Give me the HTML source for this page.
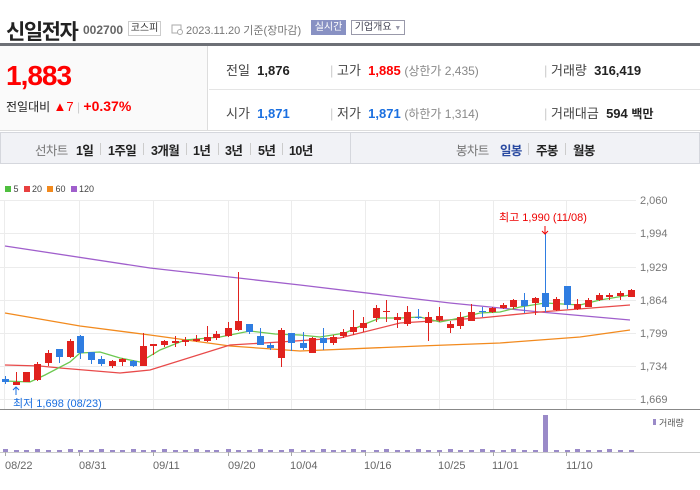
<!DOCTYPE html>
<html><head><meta charset="utf-8"><style>
*{margin:0;padding:0;box-sizing:border-box}
body{width:700px;height:490px;background:#fff;font-family:"Liberation Sans","Noto Sans CJK KR",sans-serif;position:relative;overflow:hidden;color:#333}
.a{position:absolute;white-space:nowrap}
.t{position:absolute;top:140px;font-size:12.5px;color:#222;letter-spacing:-0.6px;font-weight:bold}
.g{color:#777;font-weight:normal}
.s{position:absolute;top:143px;width:1px;height:12px;background:#ccc}
</style></head><body>
<div class="a" style="left:6px;top:16px;font-size:21px;font-weight:bold;color:#222;letter-spacing:-1.5px">신일전자</div>
<div class="a" style="left:83px;top:23px;font-size:12px;font-weight:bold;color:#666">002700</div>
<div class="a" style="left:128px;top:21px;width:33px;height:15px;border:1px solid #ccc;font-size:10px;text-align:center;line-height:13px;color:#333">코스피</div>
<svg class="a" style="left:171px;top:23px" width="12" height="12"><rect x="1" y="2" width="9" height="8" fill="none" stroke="#aaa"/><circle cx="9" cy="9" r="2.5" fill="#fff" stroke="#aaa"/></svg>
<div class="a" style="left:186px;top:22px;font-size:11px;color:#777">2023.11.20 기준(장마감)</div>
<div class="a" style="left:311px;top:20px;width:35px;height:15px;background:#8891c3;color:#fff;font-size:10px;text-align:center;line-height:15px">실시간</div>
<div class="a" style="left:351px;top:20px;width:54px;height:15px;border:1px solid #99a;color:#445;font-size:10px;text-align:center;line-height:13px">기업개요 <span style="color:#99a;font-size:7px">▼</span></div>
<div class="a" style="left:0;top:43px;width:700px;height:3px;background:#6d7076"></div>
<div class="a" style="left:0;top:46px;width:208px;height:84px;background:#fafafa;border-right:1px solid #ddd"></div>
<div class="a" style="left:6px;top:60px;font-size:28px;font-weight:bold;color:#f00;letter-spacing:-1px">1,883</div>
<div class="a" style="left:6px;top:98px;font-size:12px;color:#222">전일대비 <span style="color:#f00;font-size:13px">▲7</span> <span style="color:#ccc">|</span> <b style="color:#f00;font-size:14px">+0.37%</b></div>
<div class="a" style="left:209px;top:89px;width:491px;height:1px;background:#e5e5e5"></div>
<div class="a" style="left:0;top:130px;width:700px;height:1px;background:#ddd"></div>
<div class="a" style="left:226px;top:60px;font-size:13px;color:#444">전일 &nbsp;<b style="color:#222">1,876</b></div>
<div class="a" style="left:330px;top:60px;font-size:13px;color:#444"><span style="color:#ccc">|</span> 고가 &nbsp;<b style="color:#f00">1,885</b> <span style="color:#888;font-size:12px">(상한가 2,435)</span></div>
<div class="a" style="left:544px;top:60px;font-size:13px;color:#444"><span style="color:#ccc">|</span> 거래량 &nbsp;<b style="color:#222">316,419</b></div>
<div class="a" style="left:226px;top:103px;font-size:13px;color:#444">시가 &nbsp;<b style="color:#1a6fe0">1,871</b></div>
<div class="a" style="left:330px;top:103px;font-size:13px;color:#444"><span style="color:#ccc">|</span> 저가 &nbsp;<b style="color:#1a6fe0">1,871</b> <span style="color:#888;font-size:12px">(하한가 1,314)</span></div>
<div class="a" style="left:544px;top:103px;font-size:13px;color:#444"><span style="color:#ccc">|</span> 거래대금 &nbsp;<b style="color:#222">594</b> <b style="color:#222;font-size:12px">백만</b></div>
<div class="a" style="left:0;top:132px;width:700px;height:32px;background:#f1f2f6;border:1px solid #d5d7dd"></div>
<div class="a" style="left:350px;top:132px;width:1px;height:32px;background:#d5d7dd"></div>
<span class="t g" style="left:35px">선차트</span>
<span class="t" style="left:76px">1일</span><i class="s" style="left:100px"></i>
<span class="t" style="left:108px">1주일</span><i class="s" style="left:143px"></i>
<span class="t" style="left:151px">3개월</span><i class="s" style="left:186px"></i>
<span class="t" style="left:193px">1년</span><i class="s" style="left:218px"></i>
<span class="t" style="left:225px">3년</span><i class="s" style="left:250px"></i>
<span class="t" style="left:258px">5년</span><i class="s" style="left:282px"></i>
<span class="t" style="left:289px">10년</span>
<span class="t g" style="left:456px">봉차트</span>
<span class="t" style="left:500px;color:#2a4aa0">일봉</span><i class="s" style="left:528px"></i>
<span class="t" style="left:536px">주봉</span><i class="s" style="left:565px"></i>
<span class="t" style="left:573px">월봉</span>
<div class="a" style="left:5px;top:184px;font-size:9px;color:#444"><span style="display:inline-block;width:6px;height:6px;background:#4fbf3f"></span> 5 &nbsp;<span style="display:inline-block;width:6px;height:6px;background:#e84040"></span> 20 &nbsp;<span style="display:inline-block;width:6px;height:6px;background:#f28a1e"></span> 60 &nbsp;<span style="display:inline-block;width:6px;height:6px;background:#a05fcc"></span> 120</div>
<svg class="a" style="left:0;top:0" width="700" height="490" id="c">
<g stroke="#ececec" stroke-width="1">
<line x1="0" y1="200.5" x2="636" y2="200.5"/><line x1="0" y1="233.5" x2="636" y2="233.5"/><line x1="0" y1="267.5" x2="636" y2="267.5"/><line x1="0" y1="300.5" x2="636" y2="300.5"/><line x1="0" y1="333.5" x2="636" y2="333.5"/><line x1="0" y1="366.5" x2="636" y2="366.5"/><line x1="0" y1="399.5" x2="636" y2="399.5"/>
<line x1="4.5" y1="200" x2="4.5" y2="409"/><line x1="79.5" y1="200" x2="79.5" y2="409"/><line x1="153.5" y1="200" x2="153.5" y2="409"/><line x1="228.5" y1="200" x2="228.5" y2="409"/><line x1="291.5" y1="200" x2="291.5" y2="409"/><line x1="365.5" y1="200" x2="365.5" y2="409"/><line x1="439.5" y1="200" x2="439.5" y2="409"/><line x1="493.5" y1="200" x2="493.5" y2="409"/><line x1="566.5" y1="200" x2="566.5" y2="409"/>
</g>
<g font-size="11" fill="#777" font-family="Liberation Sans,sans-serif">
<text x="640" y="204">2,060</text><text x="640" y="237">1,994</text><text x="640" y="271">1,929</text><text x="640" y="304">1,864</text><text x="640" y="337">1,799</text><text x="640" y="370">1,734</text><text x="640" y="403">1,669</text>
</g>
<line x1="0" y1="409.5" x2="700" y2="409.5" stroke="#888"/>
<line x1="0" y1="452.5" x2="700" y2="452.5" stroke="#ccc"/>
<g fill="none" stroke-width="1.3">
<polyline stroke="#a05fcc" points="5,246 150,268 300,285 450,303 540,312 630,320"/>
<polyline stroke="#f28a1e" points="5,313 80,326 150,335 230,346 300,351 420,346 500,343 580,337 630,330"/>
<polyline stroke="#e84a4a" points="5,365 40,366 60,368 120,373 150,370 230,345 280,342 340,338 400,323 480,318 540,312 630,305"/>
<polyline stroke="#6cc850" points="5,381 30,382 45,375 70,362 80,353 100,352 120,358 140,362 160,350 185,340 220,337 250,331 275,334 300,335 320,337 345,333 365,324 380,318 400,318 420,317 440,322 460,318 480,313 500,312 520,307 545,303 580,305 600,300 630,295"/>
</g>
<g id="k"></g>
<g id="v" fill="#9a8ac8"></g>
<rect x="543" y="415" width="5" height="37" fill="#9a8ac8"/>
<rect x="653" y="419" width="3" height="6" fill="#9a8ac8"/>
<text x="659" y="426" font-size="9" fill="#555">거래량</text>
<text x="499" y="221" font-size="11" fill="#e00">최고 1,990 (11/08)</text>
<path d="M545 226V234M542 231L545 234L548 231" stroke="#e00" fill="none"/>
<path d="M16 395V387M13 390L16 387L19 390" stroke="#1a6fe0" fill="none"/>
<text x="13" y="407" font-size="11" fill="#1a6fe0">최저 1,698 (08/23)</text>
<g stroke="#aaa"><line x1="5.5" y1="452" x2="5.5" y2="456"/><line x1="79.5" y1="452" x2="79.5" y2="456"/><line x1="153.5" y1="452" x2="153.5" y2="456"/><line x1="228.5" y1="452" x2="228.5" y2="456"/><line x1="291.5" y1="452" x2="291.5" y2="456"/><line x1="365.5" y1="452" x2="365.5" y2="456"/><line x1="439.5" y1="452" x2="439.5" y2="456"/><line x1="493.5" y1="452" x2="493.5" y2="456"/><line x1="566.5" y1="452" x2="566.5" y2="456"/></g>
<g font-size="11" fill="#666"><text x="5" y="469">08/22</text><text x="79" y="469">08/31</text><text x="153" y="469">09/11</text><text x="228" y="469">09/20</text><text x="290" y="469">10/04</text><text x="364" y="469">10/16</text><text x="438" y="469">10/25</text><text x="492" y="469">11/01</text><text x="566" y="469">11/10</text></g>
</svg>
<script>
var d=[[5,'b',379,382,376,384],[16,'r',382,385,372,385],[26,'r',372,382,372,382],[37,'r',364,380,362,381],[48,'r',353,363,350,366],[59,'b',349,357,349,363],[70,'r',341,357,339,358],[80,'b',336,353,335,359],[91,'b',352,360,352,364],[101,'b',359,364,356,366],[112,'r',361,366,360,368],[122,'r',359,362,358,366],[133,'b',361,366,360,367],[143,'r',346,366,333,366],[153,'r',344,346,344,355],[164,'r',341,345,340,347],[175,'r',341,343,336,347],[185,'r',340,342,337,346],[196,'r',339,341,335,342],[207,'r',337,341,326,342],[216,'r',334,338,331,340],[228,'r',328,336,322,337],[238,'r',321,330,272,331],[249,'b',324,332,324,334],[260,'b',336,345,328,345],[270,'b',345,348,343,350],[281,'r',330,358,328,367],[291,'b',333,343,333,351],[303,'b',343,348,332,350],[312,'r',338,353,337,353],[323,'b',338,343,328,350],[333,'r',337,343,335,345],[343,'r',332,336,329,338],[353,'r',327,332,310,335],[363,'r',323,328,317,332],[376,'r',308,318,305,322],[386,'r',311,312,300,322],[397,'r',317,320,313,328],[407,'r',312,324,306,326],[418,'b',317,318,309,319],[428,'r',317,323,312,341],[439,'r',316,320,307,322],[450,'r',324,328,321,333],[460,'r',317,326,312,329],[471,'r',312,321,304,321],[482,'b',311,312,307,317],[492,'r',308,312,307,313],[503,'r',305,308,303,309],[513,'r',300,307,299,309],[524,'b',300,306,293,313],[535,'r',298,303,297,315],[545,'b',293,307,234,312],[556,'r',299,310,297,311],[567,'b',286,305,286,309],[577,'r',304,309,299,310],[588,'r',300,307,298,307],[599,'r',295,300,293,301],[609,'r',295,297,293,300],[620,'r',293,296,291,300],[631,'r',290,297,289,297]];
var s='',v='';d.forEach(function(c,i){var col=c[1]=='r'?'#e0221e':'#2f7de1';s+='<line x1="'+(c[0]+.5)+'" x2="'+(c[0]+.5)+'" y1="'+c[4]+'" y2="'+c[5]+'" stroke="'+col+'"/><rect x="'+(c[0]-3)+'" y="'+c[2]+'" width="7" height="'+Math.max(1,c[3]-c[2])+'" fill="'+col+'"/>';if(c[0]!=545){var h=(i%3==0)?3:2;v+='<rect x="'+(c[0]-2)+'" y="'+(452-h)+'" width="5" height="'+h+'"/>';}});
document.getElementById('k').innerHTML=s;document.getElementById('v').innerHTML=v;
</script>
</body></html>
